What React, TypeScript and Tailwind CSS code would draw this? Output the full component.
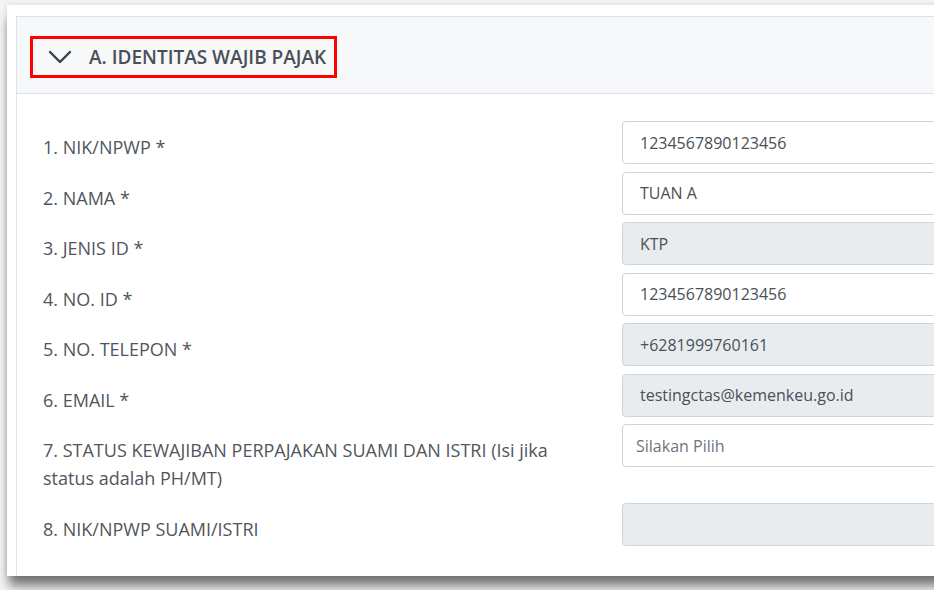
import React from 'react';

type Field = {
  label: string;
  value: string;
  disabled?: boolean;
  select?: boolean;
};

const fields: Field[] = [
  { label: '1. NIK/NPWP *', value: '1234567890123456' },
  { label: '2. NAMA *', value: 'TUAN A' },
  { label: '3. JENIS ID *', value: 'KTP', disabled: true },
  { label: '4. NO. ID *', value: '1234567890123456' },
  { label: '5. NO. TELEPON *', value: '+6281999760161', disabled: true },
  { label: '6. EMAIL *', value: 'testingctas@kemenkeu.go.id', disabled: true },
  {
    label: '7. STATUS KEWAJIBAN PERPAJAKAN SUAMI DAN ISTRI (Isi jika status adalah PH/MT)',
    value: 'Silakan Pilih',
    select: true,
  },
  { label: '8. NIK/NPWP SUAMI/ISTRI', value: '', disabled: true },
];

function FormRow({ field }: { field: Field }) {
  const boxColor = field.disabled ? 'bg-[#e9ecef]' : 'bg-white';
  return (
    <div className="flex items-start mb-[7.5px]">
      <div className="w-[550px] shrink-0 pt-[12px] pb-[3px] text-[18px] leading-[28px] text-[#50565c]">
        {field.label}
      </div>
      <div
        className={`ml-[29px] w-[380px] shrink-0 h-[43px] flex items-center border border-[#ced4da] rounded-[4px] ${boxColor} ${
          field.select ? 'pl-[13px] text-[#6c757d]' : 'pl-[17px] text-[#495057]'
        } text-[16px]`}
      >
        {field.value}
      </div>
    </div>
  );
}

export default function App() {
  return (
    <div
      className="w-[934px] h-[590px] overflow-hidden bg-[#f4f4f4] pt-[5px] pl-[7px]"
      style={{ fontFamily: '"Open Sans", "Noto Sans", sans-serif' }}
    >
      <div className="w-[1000px] h-[571px] bg-white pt-[11px] pl-[9px] shadow-[0_0_6px_rgba(0,0,0,0.12),0_12px_10px_-2px_rgba(0,0,0,0.5)]">
        <div className="h-full border-l border-t border-[#dee2e6]">
          <div className="h-[77px] bg-[#f7f8fa] border-b border-[#dee2e6] pt-[19px] pl-[13px]">
            <div className="w-[307px] h-[42px] border-[3px] border-[#ff0000] flex items-center pl-[15px]">
              <svg width="24" height="14" viewBox="0 0 24 14" className="shrink-0">
                <polyline
                  points="2,2 12,12 22,2"
                  fill="none"
                  stroke="#3a3f45"
                  strokeWidth="2.4"
                  strokeLinecap="round"
                  strokeLinejoin="round"
                />
              </svg>
              <span className="ml-[17px] text-[19px] font-semibold text-[#495057] whitespace-nowrap">
                A. IDENTITAS WAJIB PAJAK
              </span>
            </div>
          </div>
          <div className="pt-[27px] pl-[26px]">
            {fields.map((f) => (
              <FormRow key={f.label} field={f} />
            ))}
          </div>
        </div>
      </div>
    </div>
  );
}
